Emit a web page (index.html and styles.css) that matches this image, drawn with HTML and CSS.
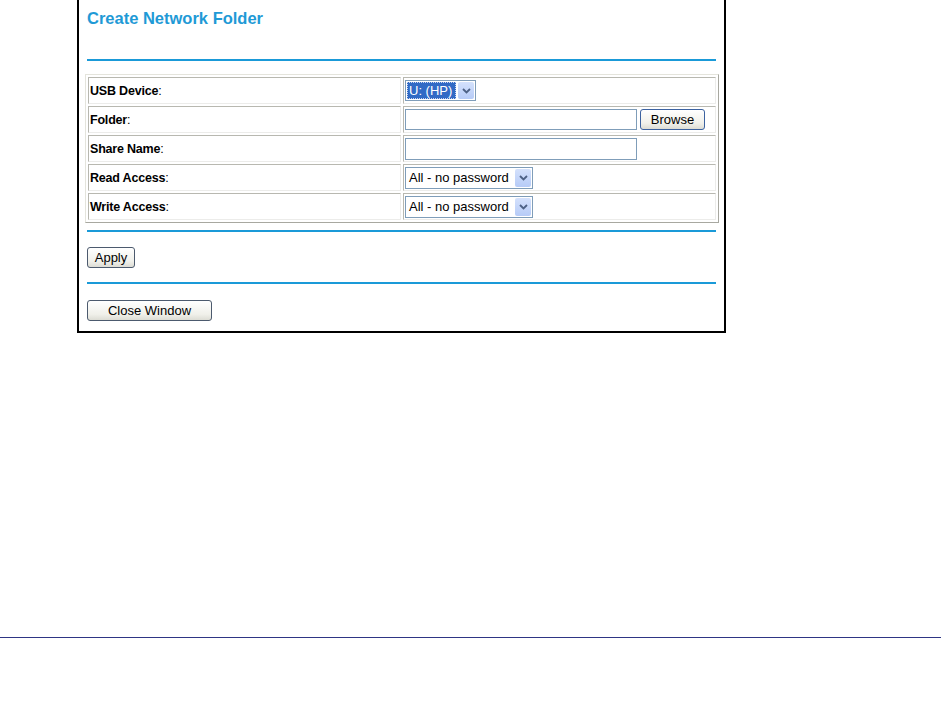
FILE: index.html
```html
<!DOCTYPE html>
<html>
<head>
<meta charset="utf-8">
<title>Create Network Folder</title>
<link rel="stylesheet" href="styles.css">
</head>
<body>
<div class="page">
  <div class="frame">
    <h1 class="title">Create Network Folder</h1>
    <div class="rule rule-top"></div>
    <table class="form-table">
      <tr>
        <td class="label">USB Device<span class="colon">:</span></td>
        <td class="value">
          <span class="select select-usb"><span class="sel-text selected">U: (HP)</span><span class="sel-btn"><svg width="9" height="6" viewBox="0 0 9 6"><path d="M1 1 L4.5 4.5 L8 1" fill="none" stroke="#4d6185" stroke-width="1.8"/></svg></span></span>
        </td>
      </tr>
      <tr>
        <td class="label">Folder<span class="colon">:</span></td>
        <td class="value">
          <div class="field-row"><span class="text-input"></span><span class="btn btn-browse">Browse</span></div>
        </td>
      </tr>
      <tr>
        <td class="label">Share Name<span class="colon">:</span></td>
        <td class="value"><span class="text-input share"></span></td>
      </tr>
      <tr>
        <td class="label">Read Access<span class="colon">:</span></td>
        <td class="value">
          <span class="select select-access"><span class="sel-text">All - no password</span><span class="sel-btn"><svg width="9" height="6" viewBox="0 0 9 6"><path d="M1 1 L4.5 4.5 L8 1" fill="none" stroke="#4d6185" stroke-width="1.8"/></svg></span></span>
        </td>
      </tr>
      <tr>
        <td class="label">Write Access<span class="colon">:</span></td>
        <td class="value">
          <span class="select select-access"><span class="sel-text">All - no password</span><span class="sel-btn"><svg width="9" height="6" viewBox="0 0 9 6"><path d="M1 1 L4.5 4.5 L8 1" fill="none" stroke="#4d6185" stroke-width="1.8"/></svg></span></span>
        </td>
      </tr>
    </table>
    <div class="rule rule-mid"></div>
    <div class="btn-row apply-row"><span class="btn btn-apply">Apply</span></div>
    <div class="rule rule-low"></div>
    <div class="btn-row close-row"><span class="btn btn-close">Close Window</span></div>
  </div>
  <div class="footer-rule"></div>
</div>
</body>
</html>
```

FILE: styles.css
```css
html, body {
  margin: 0;
  padding: 0;
  background: #fff;
}
body {
  font-family: "Liberation Sans", Arial, sans-serif;
  color: #000;
}
.page {
  width: 941px;
  height: 705px;
  display: flex;
  flex-direction: column;
}
.frame {
  margin-left: 77px;
  width: 629px;
  padding: 9px 8px 10px 8px;
  border-left: 2px solid #000;
  border-right: 2px solid #000;
  border-bottom: 2px solid #000;
  display: flex;
  flex-direction: column;
}
.title {
  margin: 0;
  font-size: 16.5px;
  line-height: 19px;
  font-weight: bold;
  color: #1f9ad6;
}
.rule {
  height: 2px;
  background: #1a9ad8;
}
.rule-top { margin-top: 31px; }
.rule-mid { margin-top: 7px; }
.rule-low { margin-top: 14px; }

.form-table {
  margin: 13px -3px 0 -2px;
  width: 634px;
  border-collapse: separate;
  border-spacing: 2px;
  border: 1px solid;
  border-color: #e4e4dc #a8a8a0 #a8a8a0 #e4e4dc;
}
.form-table td {
  height: 25px;
  padding: 0 1px;
  border: 1px solid;
  border-color: #b8b8b0 #ececea #ececea #b8b8b0;
  font-size: 12.5px;
  vertical-align: middle;
}
.form-table td.label {
  width: 309px;
  font-weight: bold;
  letter-spacing: -0.2px;
}
.colon { font-weight: normal; }
.form-table td.value {
  padding-left: 1px;
}
.select {
  display: inline-flex;
  align-items: stretch;
  height: 21px;
  border: 1px solid #7f9db9;
  background: #fff;
  box-sizing: border-box;
  vertical-align: middle;
}
.select-usb { width: 71px; }
.select-access { width: 128px; height: 22px; }
.sel-text {
  flex: 1;
  display: flex;
  align-items: center;
  padding-left: 3px;
  font-size: 13px;
  color: #000;
}
.sel-text.selected {
  margin: 1px;
  padding-left: 2px;
  background: #316ac5;
  color: #fff;
  outline: 1px dotted #c8d4f0;
  outline-offset: -1px;
}
.sel-btn {
  width: 16px;
  margin: 1px;
  background: linear-gradient(#d4e1fc, #b6cbf7);
  border-radius: 2px;
  display: flex;
  align-items: center;
  justify-content: center;
}
.field-row {
  display: flex;
  align-items: center;
  gap: 3px;
}
.text-input {
  display: inline-block;
  width: 232px;
  height: 21px;
  border: 1px solid #7f9db9;
  box-sizing: border-box;
  background: #fff;
  vertical-align: middle;
}
.text-input.share { height: 22px; }
.btn {
  display: inline-flex;
  align-items: center;
  justify-content: center;
  height: 21px;
  box-sizing: border-box;
  border: 1px solid #4c5a6e;
  border-radius: 3px;
  background: linear-gradient(#ffffff, #f0f0ea 70%, #dcdcd4);
  font-size: 13px;
  color: #000;
}
.btn-browse {
  width: 65px;
  border-color: #3c62a0;
}
.btn-row { display: flex; }
.apply-row { margin-top: 15px; }
.close-row { margin-top: 16px; }
.btn-apply { width: 48px; }
.btn-close { width: 125px; }

.footer-rule {
  margin-top: 304px;
  height: 1px;
  background: #2e3584;
}
```
